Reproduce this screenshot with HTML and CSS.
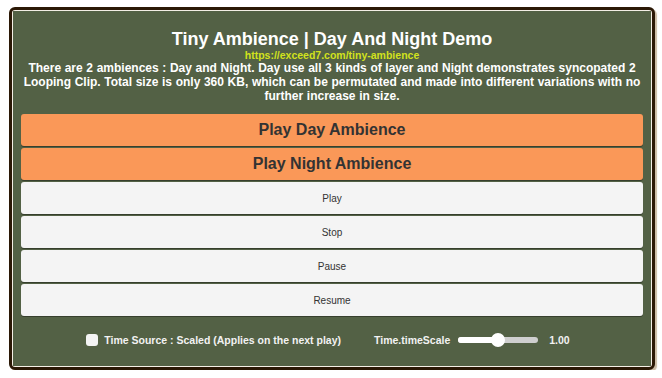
FILE: index.html
```html
<!DOCTYPE html>
<html lang="en">
<head>
    <meta charset="UTF-8">
    <meta name="viewport" content="width=device-width, initial-scale=1.0">
    <title>Tiny Ambience | Day And Night Demo</title>
    <link rel="stylesheet" href="styles.css">
</head>
<body>
    <div class="frame">
        <div class="panel">
            <h1>Tiny Ambience | Day And Night Demo</h1>
            <a class="link" href="#">https://exceed7.com/tiny-ambience</a>
            <p class="desc">There are 2 ambiences : Day and Night. Day use all 3 kinds of layer and Night demonstrates syncopated 2 Looping Clip. Total size is only 360 KB, which can be permutated and made into different variations with no further increase in size.</p>

            <div class="buttons">
                <button class="btn big">Play Day Ambience</button>
                <button class="btn big">Play Night Ambience</button>
                <button class="btn">Play</button>
                <button class="btn">Stop</button>
                <button class="btn">Pause</button>
                <button class="btn">Resume</button>
            </div>

            <div class="options">
                <label class="toggle">
                    <span class="box"></span>
                    Time Source : Scaled (Applies on the next play)
                </label>
                <div class="scale">
                    <span>Time.timeScale</span>
                    <div class="slider">
                        <div class="fill" style="width: 50%"></div>
                        <div class="thumb" style="left: 50%"></div>
                    </div>
                    <span class="value">1.00</span>
                </div>
            </div>
        </div>
    </div>
</body>
</html>
```

FILE: styles.css
```css
/* Demo scene UI */
body {
    margin: 0;
    background: #fff;
    font-family: "Liberation Sans", Arial, sans-serif;
}
.frame {
    box-sizing: border-box;
    width: 646px;
    height: 363px;
    margin: 7px 0 0 9px;
    border: 3px solid #2b1806;
    border-radius: 6px;
    background: #f4efe6;
    padding: 1px;
    box-shadow: 2px 2px 1px #cbbca6;
}
.panel {
    box-sizing: border-box;
    height: 100%;
    background: #536145;
    padding: 18px 8px 0;
    text-align: center;
    color: #fff;
}
h1 {
    margin: 0;
    font-size: 18px;
    line-height: 20px;
    color: #fff;
}
.link {
    display: block;
    font-size: 10.5px;
    line-height: 12px;
    font-weight: bold;
    color: #d2e21c;
    text-decoration: none;
}
.desc {
    margin: 0 -2px;
    font-size: 12px;
    line-height: 14px;
    font-weight: bold;
    word-spacing: 0.3px;
}
.buttons {
    display: flex;
    flex-direction: column;
    gap: 2px;
    margin-top: 11px;
}
.btn {
    height: 32px;
    border: none;
    border-radius: 3px;
    background: #f4f4f4;
    color: #333;
    font-family: inherit;
    font-size: 10px;
    box-shadow: 0 1px 0 rgba(0, 0, 0, 0.35);
}
.btn.big {
    background: #fa9858;
    font-size: 16px;
    font-weight: bold;
}
.options {
    display: flex;
    justify-content: center;
    align-items: center;
    gap: 33px;
    margin-top: 18px;
    padding-right: 8px;
    font-size: 10.5px;
    font-weight: bold;
    color: #f2f2f2;
}
.toggle {
    display: flex;
    align-items: center;
    gap: 6px;
}
.box {
    width: 12px;
    height: 12px;
    border-radius: 3px;
    background: #f4f4f4;
}
.scale {
    display: flex;
    align-items: center;
    gap: 8px;
}
.slider {
    position: relative;
    width: 80px;
    height: 6px;
    border-radius: 3px;
    background: #cfcfcf;
    margin-right: 3px;
}
.fill {
    height: 100%;
    border-radius: 3px;
    background: #fff;
}
.thumb {
    position: absolute;
    top: -4px;
    width: 14px;
    height: 14px;
    margin-left: -7px;
    border-radius: 50%;
    background: #fff;
}
```
